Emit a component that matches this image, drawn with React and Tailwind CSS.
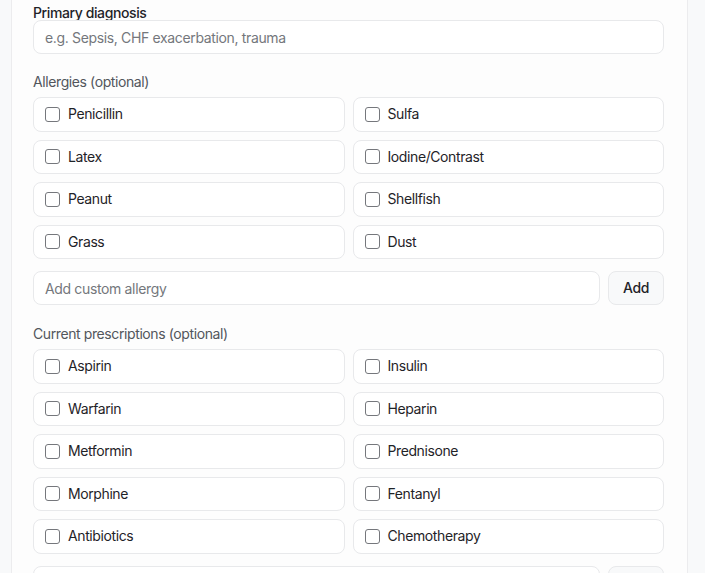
import { useState } from "react";

const ALLERGIES = ["Penicillin", "Sulfa", "Latex", "Iodine/Contrast", "Peanut", "Shellfish", "Grass", "Dust"];
const MEDS = [
  "Aspirin",
  "Insulin",
  "Warfarin",
  "Heparin",
  "Metformin",
  "Prednisone",
  "Morphine",
  "Fentanyl",
  "Antibiotics",
  "Chemotherapy",
];

const CheckItem = ({ label, checked, onToggle }) => (
  <label className="flex h-[34.5px] cursor-pointer items-center gap-2 rounded-lg border border-[#e8e9eb] bg-white pl-[11px] text-sm text-[#1f2328]">
    <span
      onClick={onToggle}
      className={`h-[15px] w-[15px] shrink-0 rounded-[3px] border ${
        checked ? "border-[#111827] bg-[#111827]" : "border-[#75777c] bg-white"
      }`}
    />
    <span onClick={onToggle}>{label}</span>
  </label>
);

const CheckGroup = ({ items }) => {
  const [picked, setPicked] = useState([]);
  const toggle = (name) =>
    setPicked((p) => (p.includes(name) ? p.filter((x) => x !== name) : [...p, name]));
  return (
    <div className="grid grid-cols-2 gap-2">
      {items.map((item) => (
        <CheckItem key={item} label={item} checked={picked.includes(item)} onToggle={() => toggle(item)} />
      ))}
    </div>
  );
};

const AddRow = ({ placeholder }) => (
  <div className="mt-3 flex gap-2">
    <input
      placeholder={placeholder}
      className="h-[34px] flex-1 rounded-lg border border-[#e8e9eb] bg-white px-[11px] text-sm tracking-tight text-[#1f2328] placeholder:text-[#74777c] outline-none"
    />
    <button className="h-[34px] w-[56px] rounded-lg border border-[#e8e9eb] bg-[#f8f9fa] text-sm font-medium tracking-tight text-[#1f2328]">
      Add
    </button>
  </div>
);

export default function App() {
  return (
    <div
      className="min-h-screen bg-[#f8f9fa] tracking-tight"
      style={{ fontFamily: "Inter, 'Liberation Sans', sans-serif" }}
    >
      <div className="ml-[11px] w-[677px] border-x border-[#ececee] bg-[#fdfdfd] pl-[21px] pr-[23px] pt-[5px] pb-10">
        <label className="block text-sm font-medium leading-4 text-[#1f2328]">Primary diagnosis</label>
        <input
          placeholder="e.g. Sepsis, CHF exacerbation, trauma"
          className="mt-[-1px] h-[34px] w-full rounded-lg border border-[#e8e9eb] bg-white px-[11px] text-sm tracking-tight text-[#1f2328] placeholder:text-[#74777c] outline-none"
        />

        <div className="mt-[18px] mb-[5px] text-sm leading-5 text-[#52565c]">Allergies (optional)</div>
        <CheckGroup items={ALLERGIES} />
        <AddRow placeholder="Add custom allergy" />

        <div className="mt-[19px] mb-[5px] text-sm leading-5 text-[#52565c]">Current prescriptions (optional)</div>
        <CheckGroup items={MEDS} />
        <AddRow placeholder="Add custom prescription" />
      </div>
    </div>
  );
}
